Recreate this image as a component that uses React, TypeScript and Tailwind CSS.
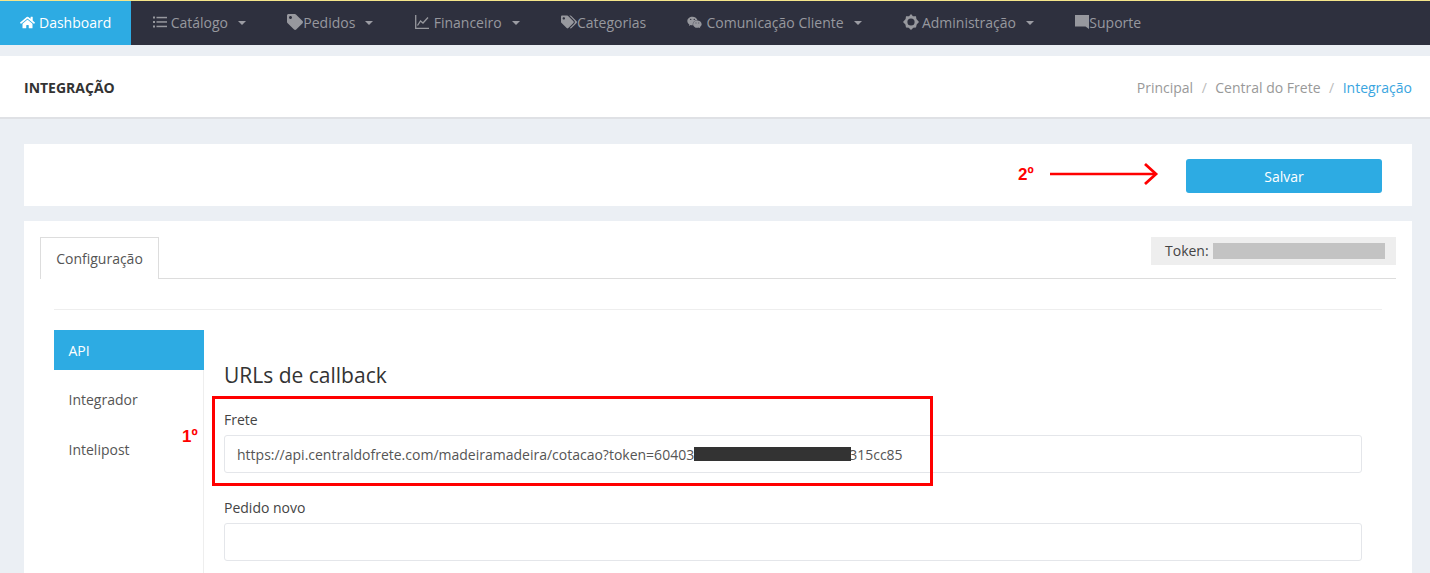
import React from 'react';
import { FaHome, FaTag, FaTags, FaWeixin } from 'react-icons/fa';

function ListIcon() {
  return (
    <svg className="mr-[4px] h-[14px] w-[14px]" viewBox="0 0 14 14" fill="currentColor">
      <rect x="0" y="1.5" width="2" height="2" />
      <rect x="0" y="6" width="2" height="2" />
      <rect x="0" y="10.5" width="2" height="2" />
      <rect x="3.5" y="1.8" width="10.5" height="1.5" />
      <rect x="3.5" y="6.2" width="10.5" height="1.5" />
      <rect x="3.5" y="10.7" width="10.5" height="1.5" />
    </svg>
  );
}

function ChartIcon() {
  return (
    <svg className="mr-[5px] h-[14px] w-[14px]" viewBox="0 0 14 14" fill="none" stroke="currentColor" strokeWidth="1.3">
      <path d="M0.7 0V13.3H14" />
      <path d="M2.5 10.5L5.5 6L8 8L13 2.5" />
    </svg>
  );
}

function GearIcon() {
  return (
    <svg className="mr-[3px] h-[16px] w-[16px]" viewBox="0 0 16 16" fill="currentColor">
      <path
        fillRule="evenodd"
        d="M8 0L10 2.2L13 2.2L13.4 5L16 8L13.7 10.4L13 13.6L10.3 13.7L8 16L5.7 13.7L3 13.6L2.4 10.4L0 8L2.6 5L3 2.2L6 2.2ZM8 4.4A3.6 3.6 0 1 0 8 11.6A3.6 3.6 0 1 0 8 4.4Z"
      />
    </svg>
  );
}

function SquareCommentIcon() {
  return (
    <svg className="h-[16px] w-[14px]" viewBox="0 0 14 16" fill="currentColor">
      <path d="M0 1H14V15L10.5 12.5H0Z" />
    </svg>
  );
}

const navItems = [
  { label: 'Catálogo', icon: <ListIcon />, caret: true },
  { label: 'Pedidos', icon: <FaTag className="h-[16px] w-[16px]" />, caret: true },
  { label: 'Financeiro', icon: <ChartIcon />, caret: true },
  { label: 'Categorias', icon: <FaTags className="h-[16px] w-[16px]" />, caret: false },
  { label: 'Comunicação Cliente', icon: <FaWeixin className="mr-[4px] h-[15px] w-[15px]" />, caret: true },
  { label: 'Administração', icon: <GearIcon />, caret: true },
  { label: 'Suporte', icon: <SquareCommentIcon />, caret: false },
];

function Caret() {
  return <span className="ml-[10px] mt-[2px] h-0 w-0 border-x-[4px] border-t-[4px] border-x-transparent border-t-[#9b9ca3]" />;
}

function App() {
  return (
    <div className="relative h-[573px] overflow-hidden bg-[#ebeff4] font-['Open_Sans',sans-serif] text-[14px] text-[#444]">
      {/* top nav */}
      <div className="flex h-[45px] items-center border-t border-t-[#f5e58a] bg-[#2e303e] text-[#97989e]">
        <div className="flex h-full w-[131px] items-center bg-[#2dabe3] pb-[2px] pl-[20px] text-white">
          <FaHome className="mr-[4px] h-[15px] w-[15px]" />
          Dashboard
        </div>
        <div className="flex h-full items-center pb-[2px] pl-[1px]">
          {navItems.map((item, index) => (
            <div key={index} className="flex h-full items-center px-[20.67px]">
              {item.icon}
              {item.label}
              {item.caret && <Caret />}
            </div>
          ))}
        </div>
      </div>

      {/* page title */}
      <div className="mt-[11px] flex h-[63px] items-center justify-between border-b-2 border-b-[#dfe1e5] bg-white pl-[24px] pr-[18px]">
        <h1 className="pt-[2px] font-bold text-[#333]">INTEGRAÇÃO</h1>
        <div className="flex items-center pt-[2px] text-[#999]">
          <span>Principal</span>
          <span className="mx-[8.5px] text-[#bbb]">/</span>
          <span>Central do Frete</span>
          <span className="mx-[8.5px] text-[#bbb]">/</span>
          <span className="text-[#3aa5e0]">Integração</span>
        </div>
      </div>

      {/* actions */}
      <div className="ml-[24px] mr-[18px] mt-[25px] flex h-[62px] items-center justify-end bg-white pr-[30px] pt-[2px]">
        <button className="h-[34px] w-[196px] rounded-[3px] bg-[#2dabe3] text-white">Salvar</button>
      </div>

      {/* main card */}
      <div className="ml-[24px] mr-[18px] mt-[15px] h-[400px] bg-white px-[16px] pt-[16px]">
        <div className="flex h-[42px] items-start justify-between border-b border-b-[#ddd]">
          <div className="flex h-[42px] w-[119px] items-center justify-center border border-b-0 border-[#ddd] bg-white text-[#555]">
            Configuração
          </div>
          <div className="relative flex h-[28px] w-[245px] items-center bg-[#eeeeee] pb-[2px] pl-[14px] text-[#444]">
            Token:
            <span className="ml-[4px] mt-[2px] h-[16px] w-[172px] bg-[#c3c3c3]" />
          </div>
        </div>

        <div className="mx-[14px] mt-[30px] border-t border-t-[#eeeeee]" />

        <div className="ml-[14px] mt-[20px] flex">
          <div className="h-[300px] w-[150px] shrink-0 border-r border-r-[#eeeeee]">
            <div className="-mr-px flex h-[40px] items-center bg-[#2dabe3] pl-[14.5px] text-white">API</div>
            <div className="mt-[10px] flex h-[40px] items-center pb-[2px] pl-[14.5px] text-[#555]">Integrador</div>
            <div className="mt-[10px] flex h-[40px] items-center pb-[2px] pl-[14.5px] text-[#555]">Intelipost</div>
          </div>
          <div className="ml-[20px] w-[1138px]">
            <h2 className="mt-[31px] text-[21px] leading-[28px] text-[#333]">URLs de callback</h2>
            <label className="mt-[21px] block leading-[20px] text-[#444]">Frete</label>
            <div className="mt-[5px] flex h-[38px] items-center rounded-[3px] border border-[#e4e6ea] pl-[12px] text-[#555]">
              https://api.centraldofrete.com/madeiramadeira/cotacao?token=60403
              <span className="z-10 h-[14px] w-[157px] bg-[#333333]" />
              <span className="-ml-[2px]">315cc85</span>
            </div>
            <label className="mt-[25px] block leading-[20px] text-[#444]">Pedido novo</label>
            <div className="mt-[5px] h-[38px] rounded-[3px] border border-[#e4e6ea]" />
          </div>
        </div>
      </div>

      {/* red annotations */}
      <div className="absolute left-[212px] top-[396px] h-[90px] w-[721px] border-[3px] border-[#ff0000]" />
      <span className="absolute left-[182px] top-[428px] font-['Liberation_Sans',sans-serif] text-[17px] font-bold leading-[18px] text-[#ff0000]">1º</span>
      <span className="absolute left-[1018px] top-[166px] font-['Liberation_Sans',sans-serif] text-[17px] font-bold leading-[18px] text-[#ff0000]">2º</span>
      <svg className="absolute left-[1048px] top-[162px]" width="112" height="24" viewBox="0 0 112 24" fill="none" stroke="#ff0000">
        <path d="M2 12H107" strokeWidth="2.6" />
        <path d="M97 2L108 12L97 22" strokeWidth="2.8" />
      </svg>
    </div>
  );
}

export default App;
